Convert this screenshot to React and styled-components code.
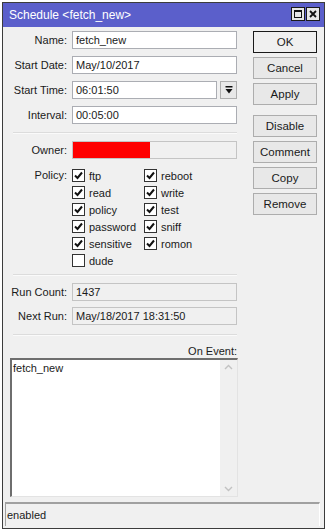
import React from 'react'
import styled, { createGlobalStyle } from 'styled-components'

const GlobalStyle = createGlobalStyle`
  html, body {
    margin: 0;
    padding: 0;
    background: #ffffff;
  }
  body {
    font-family: "Liberation Sans", Arial, sans-serif;
    font-size: 11px;
    color: #1a1a1a;
  }
`

const Window = styled.div`
  margin: 2px 0 0 2px;
  width: 321px;
  height: 525px;
  border: 1px solid #3c3c3c;
  background: #f0f0f0;
  display: flex;
  flex-direction: column;
`

const TitleBar = styled.div`
  height: 24px;
  background: #5b5fcb;
  color: #ffffff;
  display: flex;
  align-items: center;
  justify-content: space-between;
  padding: 0 4px 0 6px;
  font-size: 12px;
`

const TitleButtons = styled.div`
  display: flex;
  gap: 1px;
  margin-top: -3px;
`

const TitleButton = styled.div`
  width: 12px;
  height: 12px;
  border: 1px solid #1a1a1a;
  background: #e6e6e6;
  display: flex;
  align-items: center;
  justify-content: center;
`

const Body = styled.div`
  flex: 1;
  display: flex;
  padding: 4px 0 0 0;
`

const Form = styled.div`
  width: 234px;
  display: flex;
  flex-direction: column;
`

const Row = styled.div`
  display: grid;
  grid-template-columns: 64px 165px;
  column-gap: 5px;
  align-items: ${p => (p.top ? 'start' : 'center')};
  margin-bottom: ${p => p.gap || 7}px;
`

const Label = styled.div`
  text-align: right;
  white-space: nowrap;
  line-height: 18px;
`

const Field = styled.div`
  height: 16px;
  line-height: 16px;
  padding: 0 3px;
  border: 1px solid ${p => (p.readOnly ? '#c4c4c4' : '#abadb3')};
  background: ${p => (p.readOnly ? '#f0f0f0' : '#ffffff')};
  white-space: nowrap;
  overflow: hidden;
  position: relative;
`

const OwnerFill = styled.div`
  position: absolute;
  left: 0;
  top: 0;
  bottom: 0;
  background: #ff0000;
`

const FieldWithButton = styled.div`
  display: flex;
  gap: 3px;
`

const DropButton = styled.div`
  width: 15px;
  height: 16px;
  border: 1px solid #adadad;
  background: #e8e8e8;
  display: flex;
  align-items: center;
  justify-content: center;
`

const Separator = styled.div`
  margin: ${p => p.margin || '0'};
  margin-left: 10px;
  height: 0;
  border-top: 1px solid #dcdcdc;
  border-bottom: 1px solid #fafafa;
`

const PolicyGrid = styled.div`
  display: grid;
  grid-template-columns: 72px 80px;
  grid-auto-rows: 17px;
  margin-top: -1px;
`

const CheckItem = styled.label`
  display: flex;
  align-items: center;
  gap: 4px;
  height: 17px;
  white-space: nowrap;
`

const Box = styled.span`
  width: 11px;
  height: 11px;
  border: 1px solid #333333;
  background: #ffffff;
  display: inline-flex;
  align-items: center;
  justify-content: center;
`

const EventLabel = styled.div`
  text-align: right;
  margin: 8px 0 0;
  line-height: 14px;
  width: 234px;
`

const TextArea = styled.div`
  margin-left: 7px;
  width: 225px;
  height: 136px;
  border-top: 2px solid #6e6e6e;
  border-left: 2px solid #6e6e6e;
  border-right: 1px solid #e3e3e3;
  border-bottom: 1px solid #e3e3e3;
  background: #ffffff;
  display: flex;
`

const TextContent = styled.div`
  flex: 1;
  padding: 2px 1px;
`

const ScrollTrack = styled.div`
  width: 17px;
  background: #f0f0f0;
  display: flex;
  flex-direction: column;
  justify-content: space-between;
  align-items: center;
  padding: 4px 0;
`

const Buttons = styled.div`
  margin-left: 16px;
  width: 64px;
  display: flex;
  flex-direction: column;
  gap: 4px;
`

const Button = styled.div`
  height: 20px;
  line-height: 20px;
  font-size: 11.5px;
  text-align: center;
  border: 1px solid ${p => (p.primary ? '#1a1a1a' : '#adadad')};
  background: ${p => (p.primary ? '#f0f0f0' : '#e8e8e8')};
  margin-top: ${p => (p.spaced ? 6 : 0)}px;
`

const StatusBar = styled.div`
  margin: 0 4px 2px 2px;
  height: 22px;
  line-height: 22px;
  border-top: 2px solid #a0a0a0;
  border-left: 1px solid #a0a0a0;
  border-right: 1px solid #ffffff;
  padding-left: 1px;
`

const Check = () => (
  <svg width="9" height="9" viewBox="0 0 9 9">
    <path d="M1 4.5 L3.5 7 L8 1.5" fill="none" stroke="#111" strokeWidth="2" />
  </svg>
)

const CheckBox = ({ checked, label }) => (
  <CheckItem>
    <Box>{checked && <Check />}</Box>
    {label}
  </CheckItem>
)

const Chevron = ({ up }) => (
  <svg width="9" height="6" viewBox="0 0 9 6">
    <path
      d={up ? 'M1 5 L4.5 1.5 L8 5' : 'M1 1 L4.5 4.5 L8 1'}
      fill="none"
      stroke="#c2c2c2"
      strokeWidth="1.4"
    />
  </svg>
)

const policies = [
  ['ftp', true], ['reboot', true],
  ['read', true], ['write', true],
  ['policy', true], ['test', true],
  ['password', true], ['sniff', true],
  ['sensitive', true], ['romon', true],
  ['dude', false]
]

const App = () => (
  <>
    <GlobalStyle />
    <Window>
      <TitleBar>
        <span>Schedule &lt;fetch_new&gt;</span>
        <TitleButtons>
          <TitleButton>
            <svg width="8" height="8" viewBox="0 0 8 8">
              <rect x="0.5" y="0.5" width="7" height="7" fill="none" stroke="#111" />
              <line x1="0" y1="1.5" x2="8" y2="1.5" stroke="#111" />
            </svg>
          </TitleButton>
          <TitleButton>
            <svg width="8" height="8" viewBox="0 0 8 8">
              <path d="M1 1 L7 7 M7 1 L1 7" stroke="#111" strokeWidth="1.8" />
            </svg>
          </TitleButton>
        </TitleButtons>
      </TitleBar>
      <Body>
        <Form>
          <Row>
            <Label>Name:</Label>
            <Field>fetch_new</Field>
          </Row>
          <Row>
            <Label>Start Date:</Label>
            <Field>May/10/2017</Field>
          </Row>
          <Row>
            <Label>Start Time:</Label>
            <FieldWithButton>
              <Field style={{ flex: 1 }}>06:01:50</Field>
              <DropButton>
                <svg width="8" height="8" viewBox="0 0 8 8">
                  <rect x="0.5" y="0" width="7" height="1.5" fill="#111" />
                  <path d="M0.5 3 H7.5 L4 7.5 Z" fill="#111" />
                </svg>
              </DropButton>
            </FieldWithButton>
          </Row>
          <Row gap={8}>
            <Label>Interval:</Label>
            <Field>00:05:00</Field>
          </Row>
          <Separator margin="0 0 7px" />
          <Row gap={9}>
            <Label>Owner:</Label>
            <Field readOnly>
              <OwnerFill style={{ width: '77px' }} />
            </Field>
          </Row>
          <Row top gap={5}>
            <Label style={{ lineHeight: '15px' }}>Policy:</Label>
            <PolicyGrid>
              {policies.map(([name, on]) => (
                <CheckBox key={name} label={name} checked={on} />
              ))}
            </PolicyGrid>
          </Row>
          <Separator margin="0 0 7px" />
          <Row gap={6}>
            <Label>Run Count:</Label>
            <Field readOnly>1437</Field>
          </Row>
          <Row gap={9}>
            <Label>Next Run:</Label>
            <Field readOnly>May/18/2017 18:31:50</Field>
          </Row>
          <Separator />
          <EventLabel>On Event:</EventLabel>
          <TextArea>
            <TextContent>fetch_new</TextContent>
            <ScrollTrack>
              <Chevron up />
              <Chevron />
            </ScrollTrack>
          </TextArea>
        </Form>
        <Buttons>
          <Button primary>OK</Button>
          <Button>Cancel</Button>
          <Button>Apply</Button>
          <Button spaced>Disable</Button>
          <Button>Comment</Button>
          <Button>Copy</Button>
          <Button>Remove</Button>
        </Buttons>
      </Body>
      <StatusBar>enabled</StatusBar>
    </Window>
  </>
)

export default App
